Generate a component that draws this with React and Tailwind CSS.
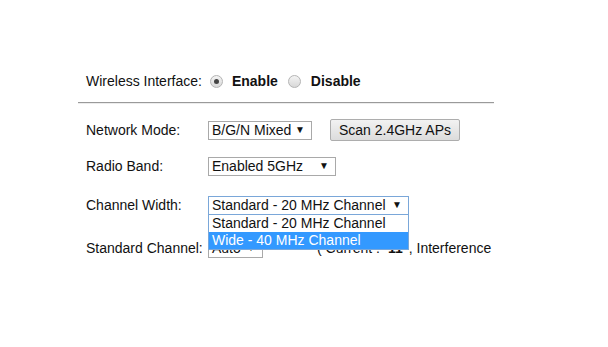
import React from 'react'

const LABEL = 'w-[122px] shrink-0'

function Radio({ checked }) {
  return (
    <span className="w-[13px] h-[13px] rounded-full border border-[#b4b4b4] bg-gradient-to-b from-[#f4f4f4] to-[#d8d8d8] flex items-center justify-center shrink-0">
      {checked && <span className="w-[5px] h-[5px] rounded-full bg-[#444]" />}
    </span>
  )
}

function Select({ value, width, focused }) {
  return (
    <div
      className={`h-[19px] flex items-center justify-between pl-[3px] pr-[6px] bg-white border ${
        focused ? 'border-[#7aa7d9]' : 'border-[#a9a9a9]'
      } ${width}`}
    >
      <span className="whitespace-nowrap">{value}</span>
      <span className="text-[10px] leading-none">▼</span>
    </div>
  )
}

export default function App() {
  return (
    <div className="w-[608px] h-[347px] bg-white text-[14px] text-[#111] font-['Liberation_Sans',Arial,sans-serif] pl-[78px] pt-[71px] relative">
      <div className="w-[416px]">
        {/* Wireless Interface */}
        <div className="h-5 flex items-center pl-[8px]">
          <span>Wireless Interface:</span>
          <span className="ml-[8px]"><Radio checked /></span>
          <span className="ml-[9px] font-bold">Enable</span>
          <span className="ml-[10px]"><Radio /></span>
          <span className="ml-[10px] font-bold">Disable</span>
        </div>

        <div className="mt-[11px] h-[2px] border-t border-[#9a9a9a] border-b border-b-[#ececec]" />

        {/* Network Mode */}
        <div className="mt-[15px] h-[22px] flex items-center pl-[8px]">
          <span className={LABEL}>Network Mode:</span>
          <Select value="B/G/N Mixed" width="w-[104px]" />
          <button className="ml-[18px] h-[22px] w-[130px] rounded-[2px] border border-[#adadad] bg-gradient-to-b from-[#f2f2f2] to-[#dcdcdc] text-[14px] text-[#111]">
            Scan 2.4GHz APs
          </button>
        </div>

        {/* Radio Band */}
        <div className="mt-[15px] h-5 flex items-center pl-[8px]">
          <span className={LABEL}>Radio Band:</span>
          <Select value="Enabled 5GHz" width="w-[128px]" />
        </div>

        {/* Channel Width */}
        <div className="mt-[19px] h-5 flex items-center pl-[8px]">
          <span className={LABEL}>Channel Width:</span>
          <div className="relative">
            <Select value="Standard - 20 MHz Channel" width="w-[201px]" focused />
            {/* open dropdown list */}
            <div className="absolute left-0 top-[19px] z-10 w-[201px] bg-white border border-[#7aa7d9] border-t-0 leading-[16px]">
              <div className="px-[3px] h-[17px] flex items-center">Standard - 20 MHz Channel</div>
              <div className="px-[3px] h-[17px] flex items-center bg-[#3399ff] text-white">Wide - 40 MHz Channel</div>
            </div>
          </div>
        </div>

        {/* Standard Channel */}
        <div className="mt-[23px] h-5 flex items-center pl-[8px] whitespace-nowrap">
          <span className={LABEL}>Standard Channel:</span>
          <Select value="Auto" width="w-[55px]" />
          <span className="ml-[54px]">
            ( Current :<b className="ml-[8px] mr-[2px]">11</b> , Interference
          </span>
        </div>
      </div>
    </div>
  )
}
